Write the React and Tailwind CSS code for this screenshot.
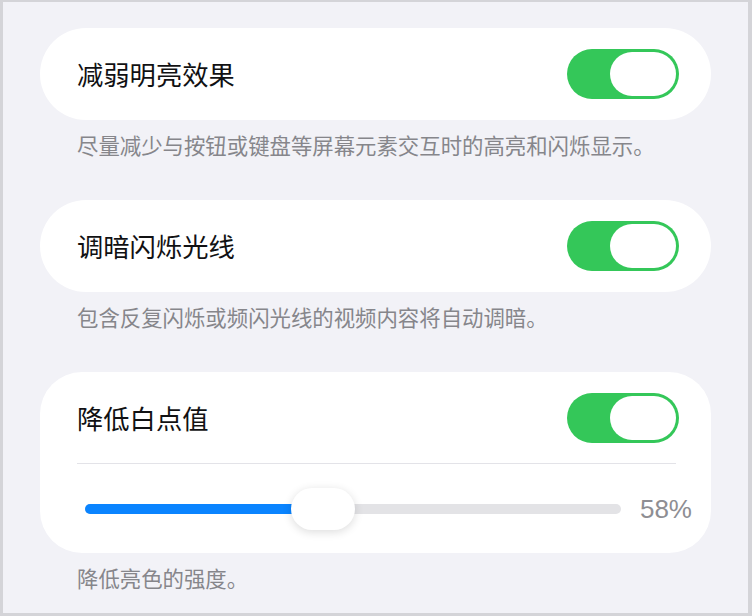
const font = { fontFamily: '"Noto Sans CJK SC", "Noto Sans", sans-serif' }

function Toggle() {
  return (
    <div className="w-[112px] h-[50px] rounded-full bg-[#34c759] p-[3px] flex justify-end shrink-0">
      <div className="w-[66px] h-[44px] rounded-full bg-white" />
    </div>
  )
}

function Row({ title }) {
  return (
    <div className="h-[92px] flex items-center justify-between pl-[37px] pr-[32px]">
      <span className="text-[26.3px] leading-[34px] text-[#111113]">{title}</span>
      <Toggle />
    </div>
  )
}

function Note({ children, last }) {
  return (
    <p className={`px-[74px] pt-[12px] text-[21.4px] leading-[26px] text-[#86868b] ${last ? 'pb-0' : 'pb-[42px]'}`}>
      {children}
    </p>
  )
}

export default function App() {
  return (
    <div className="w-[752px] h-[616px] bg-[#d4d4d8] overflow-hidden" style={font}>
      <div className="ml-[3px] mt-[2px] w-[745px] h-[611px] bg-[#f2f2f7] pt-[26px]">
        <div className="mx-[37px] bg-white rounded-[46px]">
          <Row title="减弱明亮效果" />
        </div>
        <Note>尽量减少与按钮或键盘等屏幕元素交互时的高亮和闪烁显示。</Note>

        <div className="mx-[37px] bg-white rounded-[46px]">
          <Row title="调暗闪烁光线" />
        </div>
        <Note>包含反复闪烁或频闪光线的视频内容将自动调暗。</Note>

        <div className="mx-[37px] bg-white rounded-[42px]">
          <div className="h-[91px] flex items-center justify-between pl-[37px] pr-[32px]">
            <span className="text-[26.3px] leading-[34px] text-[#111113]">降低白点值</span>
            <Toggle />
          </div>
          <div className="ml-[37px] mr-[35px] h-px bg-[#e3e3e8]" />
          <div className="h-[89px] flex items-center pl-[45px] pr-[19px] gap-[19px]">
            <div className="relative flex-1 h-[10px] rounded-full bg-[#e3e3e6]">
              <div className="absolute left-0 top-0 h-[10px] w-[230px] rounded-full bg-[#0a84ff]" />
              <div className="absolute left-[206px] top-[-16px] w-[64px] h-[42px] rounded-full bg-white shadow-[0_2px_10px_rgba(0,0,0,0.14)]" />
            </div>
            <span
              className="text-[26px] leading-[30px] text-[#8e8e93]"
              style={{ fontFamily: '"Liberation Sans", Arial, sans-serif' }}
            >
              58%
            </span>
          </div>
        </div>
        <Note last>降低亮色的强度。</Note>
      </div>
    </div>
  )
}
